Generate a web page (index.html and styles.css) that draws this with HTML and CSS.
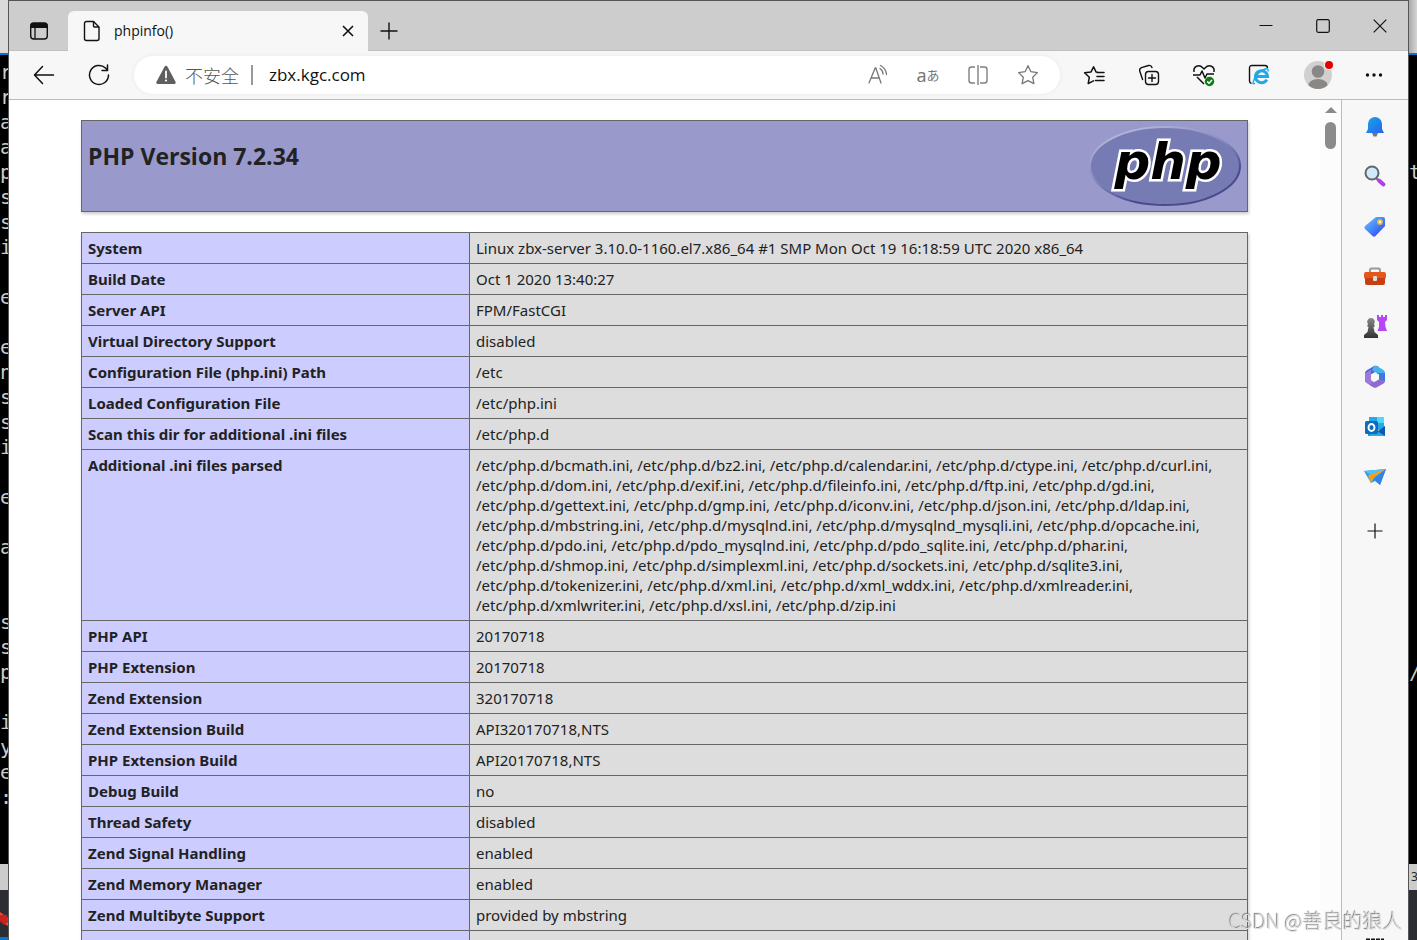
FILE: index.html
```html
<!DOCTYPE html>
<html lang="zh-CN">
<head>
<meta charset="utf-8">
<title>phpinfo()</title>
<link rel="stylesheet" href="styles.css">
</head>
<body>
<div class="desktop">
  <div class="behind behind-left">
    <div class="behind-title"></div>
    <pre class="terminal">r
r
a
a
p
s
s
i

e

e
n
s
s
i

e

a


s
s
p

i
y
e
:</pre>
    <div class="behind-status"></div>
    <div class="taskbar"><svg width="8" height="50" viewBox="0 0 8 50"><path d="M0 22l8 6v8l-8-5z" fill="#ef4a35"/><path d="M0 25h7l1 7-4 3-4-4z" fill="#c9221f"/><path d="M0 47h8v3H0z" fill="#0078d7"/></svg></div>
  </div>

  <div class="window">
    <header class="titlebar">
      <button class="tab-menu" aria-label="标签操作"><svg width="20" height="20" viewBox="0 0 20 20"><rect x="1.7" y="2" width="16.600" height="16" rx="3" fill="none" stroke="#111" stroke-width="1.400"/><path d="M1.500 7V5a3 3 0 0 1 3-3h11a3 3 0 0 1 3 3v2z" fill="#111"/><path d="M6 7v11" stroke="#111" stroke-width="1.300"/></svg></button>
      <div class="tab">
        <svg width="20" height="22" viewBox="0 0 20 22" fill="none" stroke="#111" stroke-width="1.400" stroke-linejoin="round"><path d="M4.500 1.500h7l5.500 5.500v11.500a2 2 0 0 1-2 2H4.500a2 2 0 0 1-2-2v-15a2 2 0 0 1 2-2z"/><path d="M11.500 1.500V6a1 1 0 0 0 1 1H17"/></svg>
        <span class="tab-title">phpinfo()</span>
        <button class="tab-close" aria-label="关闭标签"><svg width="12" height="12" viewBox="0 0 12 12" stroke="#111" stroke-width="1.600"><path d="M1 1l10 10M11 1L1 11"/></svg></button>
      </div>
      <button class="new-tab" aria-label="新建标签"><svg width="18" height="18" viewBox="0 0 18 18" stroke="#111" stroke-width="1.400"><path d="M9 .5v17M.5 9h17"/></svg></button>
      <div class="window-controls">
        <button aria-label="最小化"><svg width="14" height="14" viewBox="0 0 14 14" stroke="#111"><path d="M.5 6.500h13"/></svg></button>
        <button aria-label="最大化"><svg width="14" height="14" viewBox="0 0 14 14" fill="none" stroke="#111" stroke-width="1.200"><rect x=".7" y=".7" width="12.600" height="12.600" rx="1.500"/></svg></button>
        <button aria-label="关闭"><svg width="14" height="14" viewBox="0 0 14 14" stroke="#111" stroke-width="1.200"><path d="M.7.7l12.600 12.600M13.300.7L.7 13.300"/></svg></button>
      </div>
    </header>

    <nav class="toolbar">
      <button class="icon" aria-label="后退"><svg width="22" height="22" viewBox="0 0 22 22" fill="none" stroke="#111" stroke-width="1.500" stroke-linecap="round" stroke-linejoin="round"><path d="M20.500 11H1.500M9.500 2.500L1.500 11l8 8.500"/></svg></button>
      <button class="icon refresh" aria-label="刷新"><svg width="22" height="22" viewBox="0 0 22 22" fill="none" stroke="#111" stroke-width="1.500" stroke-linecap="round" stroke-linejoin="round"><path d="M20.500 11a9.500 9.500 0 1 1-3-7l2 2M19.500 1v5.500H14"/></svg></button>
      <form class="address">
        <svg class="warning" width="20" height="20" viewBox="0 0 20 20"><path d="M10 .8q1 0 1.500.9l8 15q.8 2-1.200 2.300H1.700Q-.3 18.700.5 16.700l8-15Q9 .8 10 .8z" fill="#5f5f5f"/><path d="M10 6.500v6" stroke="#fff" stroke-width="1.800" stroke-linecap="round"/><circle cx="10" cy="15.500" r="1.100" fill="#fff"/></svg>
        <label for="url">不安全</label>
        <span class="divider"></span>
        <input id="url" type="text" value="zbx.kgc.com">
        <button type="button" class="icon" aria-label="大声朗读"><svg width="22" height="22" viewBox="0 0 22 22" fill="none" stroke="#777" stroke-width="1.300" stroke-linecap="round"><path d="M2 19L8.200 4h.6L14 19M4 14h8.300"/><path d="M13 4.500q3 2 3 5.500M13.500 1.500q5.500 3 6 9" /></svg></button>
        <button type="button" class="icon translate" aria-label="翻译">a<span>あ</span></button>
        <button type="button" class="icon" aria-label="分屏"><svg width="22" height="22" viewBox="0 0 22 22" fill="none" stroke="#808080" stroke-width="1.400"><path d="M8 3H4.500a2.500 2.500 0 0 0-2.500 2.500v11A2.500 2.500 0 0 0 4.500 19H8M13 3h4.500A2.500 2.500 0 0 1 20 5.500v11a2.500 2.500 0 0 1-2.500 2.500H13M11 1v20"/></svg></button>
        <button type="button" class="icon" aria-label="收藏"><svg width="22" height="22" viewBox="0 0 22 22" fill="none" stroke="#777" stroke-width="1.300" stroke-linejoin="round"><path d="M11 1.700l2.900 6 6.500.9-4.700 4.600 1.200 6.500L11 16.600l-5.900 3.100 1.200-6.500L1.600 8.600l6.500-.9z"/></svg></button>
      </form>
      <div class="actions">
        <button class="icon" aria-label="收藏夹"><svg width="22" height="22" viewBox="0 0 22 22" fill="none" stroke="#111" stroke-width="1.500" stroke-linejoin="round" stroke-linecap="round"><path d="M14.500 8.200L13 7.900l-2.400-5.100L8 7.900l-6.400.9 4.700 4.500-1.100 6.300 5.300-2.700M14 8.500h7M14 12.500h7M12.500 16.500H21"/></svg></button>
        <button class="icon" aria-label="集锦"><svg width="22" height="22" viewBox="0 0 22 22" fill="none" stroke="#111" stroke-width="1.400" stroke-linecap="round"><rect x="7.500" y="7.500" width="13" height="13" rx="3"/><path d="M14 10.500v7M10.500 14h7M4.600 15.500L1.700 7a3 3 0 0 1 1.800-3.300L10.500 1.500a3 3 0 0 1 3.500 2"/></svg></button>
        <button class="icon" aria-label="浏览器概要"><svg width="24" height="24" viewBox="0 0 24 24" fill="none" stroke="#111" stroke-width="1.500" stroke-linejoin="round"><path d="M2 9C1 3 7 1 11 5l1 1 1-1c4-4 10-2 9 4M1 12h7l2-4 3 7 2-4h7M5 14l7 7"/><circle cx="17.500" cy="18.500" r="4.700" fill="#107c10" stroke="none"/><path d="M15.200 18.500l1.800 1.800 3-3.300" stroke="#fff"/></svg></button>
        <button class="icon" aria-label="IE 模式"><svg width="22" height="22" viewBox="0 0 22 22" fill="none"><path d="M3.500 19.500Q1.500 19 1.500 17V4Q1.500 1.500 4 1.500h13q2.500 0 2.500 2.500" stroke="#111" stroke-width="1.400"/><path d="M18.800 15.600a6 6 0 1 1 .7-3.100H9" stroke="#1ea9e9" stroke-width="3"/><path d="M7 19q-3 2.300-1.500-2Q8.500 8.500 17 5q4-1.200 3 2.500" stroke="#1ea9e9" stroke-width="1.400"/></svg></button>
        <button class="icon profile" aria-label="个人资料"><svg width="30" height="30" viewBox="0 0 30 30"><defs><clipPath id="face"><circle cx="15" cy="15" r="14"/></clipPath></defs><circle cx="15" cy="15" r="14" fill="#d2d0ce"/><g clip-path="url(#face)" fill="#8a8886"><circle cx="15" cy="11.500" r="6.300"/><ellipse cx="15" cy="26" rx="10" ry="7"/></g><circle cx="26" cy="5" r="5" fill="#f7f7f7"/><circle cx="26" cy="5" r="4" fill="#e50000"/></svg></button>
        <button class="icon" aria-label="设置及其他"><svg width="20" height="20" viewBox="0 0 20 20" fill="#111"><circle cx="3.500" cy="10" r="1.700"/><circle cx="10" cy="10" r="1.700"/><circle cx="16.500" cy="10" r="1.700"/></svg></button>
      </div>
    </nav>

    <div class="body">
      <main class="page">
        <div class="banner">
          <h1>PHP Version 7.2.34</h1>
          <svg class="logo" width="152" height="80" viewBox="0 0 152 80" role="img" aria-label="PHP logo">
            <defs><linearGradient id="rim" x1=".2" y1="0" x2=".8" y2="1"><stop offset="0" stop-color="#b8bade"/><stop offset=".45" stop-color="#8588bd"/><stop offset=".75" stop-color="#484a8c"/><stop offset="1" stop-color="#484a8c"/></linearGradient></defs>
            <ellipse cx="76" cy="40" rx="75" ry="39" fill="#777bb3" stroke="url(#rim)" stroke-width="2"/>
            <text class="logo-text" x="79" y="53" text-anchor="middle">php</text>
          </svg>
        </div>
        <table class="info">
          <colgroup><col class="key"><col></colgroup>
          <tbody>
          <tr><th scope="row">System</th><td>Linux zbx-server 3.10.0-1160.el7.x86_64 #1 SMP Mon Oct 19 16:18:59 UTC 2020 x86_64</td></tr>
          <tr><th scope="row">Build Date</th><td>Oct 1 2020 13:40:27</td></tr>
          <tr><th scope="row">Server API</th><td>FPM/FastCGI</td></tr>
          <tr><th scope="row">Virtual Directory Support</th><td>disabled</td></tr>
          <tr><th scope="row">Configuration File (php.ini) Path</th><td>/etc</td></tr>
          <tr><th scope="row">Loaded Configuration File</th><td>/etc/php.ini</td></tr>
          <tr><th scope="row">Scan this dir for additional .ini files</th><td>/etc/php.d</td></tr>
          <tr><th scope="row">Additional .ini files parsed</th><td>/etc/php.d/bcmath.ini, /etc/php.d/bz2.ini, /etc/php.d/calendar.ini, /etc/php.d/ctype.ini, /etc/php.d/curl.ini,<br>/etc/php.d/dom.ini, /etc/php.d/exif.ini, /etc/php.d/fileinfo.ini, /etc/php.d/ftp.ini, /etc/php.d/gd.ini,<br>/etc/php.d/gettext.ini, /etc/php.d/gmp.ini, /etc/php.d/iconv.ini, /etc/php.d/json.ini, /etc/php.d/ldap.ini,<br>/etc/php.d/mbstring.ini, /etc/php.d/mysqlnd.ini, /etc/php.d/mysqlnd_mysqli.ini, /etc/php.d/opcache.ini,<br>/etc/php.d/pdo.ini, /etc/php.d/pdo_mysqlnd.ini, /etc/php.d/pdo_sqlite.ini, /etc/php.d/phar.ini,<br>/etc/php.d/shmop.ini, /etc/php.d/simplexml.ini, /etc/php.d/sockets.ini, /etc/php.d/sqlite3.ini,<br>/etc/php.d/tokenizer.ini, /etc/php.d/xml.ini, /etc/php.d/xml_wddx.ini, /etc/php.d/xmlreader.ini,<br>/etc/php.d/xmlwriter.ini, /etc/php.d/xsl.ini, /etc/php.d/zip.ini</td></tr>
          <tr><th scope="row">PHP API</th><td>20170718</td></tr>
          <tr><th scope="row">PHP Extension</th><td>20170718</td></tr>
          <tr><th scope="row">Zend Extension</th><td>320170718</td></tr>
          <tr><th scope="row">Zend Extension Build</th><td>API320170718,NTS</td></tr>
          <tr><th scope="row">PHP Extension Build</th><td>API20170718,NTS</td></tr>
          <tr><th scope="row">Debug Build</th><td>no</td></tr>
          <tr><th scope="row">Thread Safety</th><td>disabled</td></tr>
          <tr><th scope="row">Zend Signal Handling</th><td>enabled</td></tr>
          <tr><th scope="row">Zend Memory Manager</th><td>enabled</td></tr>
          <tr><th scope="row">Zend Multibyte Support</th><td>provided by mbstring</td></tr>
          <tr><th scope="row">&nbsp;</th><td></td></tr>
          </tbody>
        </table>
      </main>
      <div class="scrollbar"><span class="arrow"></span><span class="thumb"></span></div>
      <aside class="sidebar">
        <button aria-label="通知"><svg width="24" height="24" viewBox="0 0 24 24"><defs><linearGradient id="bell" x2="1" y2="1"><stop stop-color="#18a6e8"/><stop offset="1" stop-color="#2563f0"/></linearGradient></defs><path d="M9 18h6l-1.500 3.500h-3z" fill="#777"/><path d="M3 18l2-4V9a7 7 0 0 1 14 0v5l2 4z" fill="url(#bell)"/></svg></button>
        <button aria-label="搜索"><svg width="24" height="24" viewBox="0 0 24 24"><path d="M12 12l3 3" stroke="#666" stroke-width="2"/><path d="M16 15.500l4.500 4" stroke="#b43cf0" stroke-width="4" stroke-linecap="round"/><circle cx="9" cy="8" r="6.500" fill="#cfeafb" stroke="#666" stroke-width="2"/></svg></button>
        <button aria-label="购物"><svg width="24" height="24" viewBox="0 0 24 24"><defs><linearGradient id="tag" x2="1" y2="1"><stop stop-color="#7cc0ff"/><stop offset=".5" stop-color="#4287fb"/><stop offset="1" stop-color="#3730e8"/></linearGradient></defs><path d="M13 2h7q2 0 2 2v7l-9.500 10q-1.500 1.500-3 0L2 14q-1.300-1.500 0-3z" fill="url(#tag)"/><circle cx="17" cy="7" r="2" fill="#fff" stroke="#f6c22c" stroke-width="1.700"/></svg></button>
        <button aria-label="工具"><svg width="24" height="24" viewBox="0 0 24 24"><path d="M7 8V5q0-1.500 1.500-1.500h7Q17 3.500 17 5v3" fill="none" stroke="#999" stroke-width="2"/><rect x="1" y="7" width="22" height="7" rx="2" fill="#e4571b"/><path d="M2 13h20v5q0 2-2 2H4q-2 0-2-2z" fill="#c73e13"/><rect x="10" y="11" width="4" height="5" rx="1" fill="#ddd"/></svg></button>
        <button aria-label="游戏"><svg width="24" height="24" viewBox="0 0 24 24"><defs><linearGradient id="pawn" y2="1" x2="0"><stop stop-color="#888"/><stop offset="1" stop-color="#333"/></linearGradient></defs><path d="M14 0h2v2h2V0h2v2h2V0h2v5l-2 2 .5 5 1.500 4h-9.500l1.500-4V7l-2-2z" fill="#b747f5"/><path d="M8 3a4 4 0 0 1 3 6.500l1 1.500-1.500 1 1 5L15 20v3H1v-3l3.500-3 1-5L4 11l1-1.500A4 4 0 0 1 8 3z" fill="url(#pawn)"/></svg></button>
        <button aria-label="Microsoft 365"><svg width="24" height="24" viewBox="0 0 24 24"><path d="M11 1L3.500 5.500Q2 6.500 2 8v9l6-3V9.500l5-3L16 2q-3-2-5-1z" fill="#4468d8"/><path d="M11 1q2-.5 4 .7l5.500 3.300Q22 6 22 8v8l-6-4V9.500l-5-3L9 5z" fill="#45b2ee"/><path d="M8 8.500V15l4 3-2 4-6.500-4Q2 17 2 15V8.500l6-4z" fill="#9b7add"/><path d="M22 14v2q0 1.500-1.500 2.500L13.500 22.500q-1.500.7-3 0L6 19.500l6-3 4-2.500V9.500l6 4z" fill="#8e6bd0"/><path d="M22 8v8l-6-2V9.500L13 8z" fill="#3d7ae0"/><path d="M12 7.500l4 2.300v4.500L12 16.600l-4-2.300V9.800z" fill="#f7f7f7"/></svg></button>
        <button aria-label="Outlook"><svg width="24" height="24" viewBox="0 0 24 24"><path d="M6 2h15v13H6z" fill="#28a8ea"/><path d="M14 2h7v6h-7z" fill="#50d9ff"/><path d="M5 12l9 5 8-6v10H5z" fill="#1490df"/><path d="M22 11v10l-8-4z" fill="#0a5ba8"/><path d="M5 21l9-5 8 5z" fill="#28a8ea"/><rect x="2" y="6" width="13" height="13" rx="1.500" fill="#0f6cbd"/><ellipse cx="8.500" cy="12.500" rx="3" ry="3.500" fill="none" stroke="#fff" stroke-width="1.900"/></svg></button>
        <button aria-label="拖放"><svg width="24" height="24" viewBox="0 0 24 24"><path d="M1 6l22-2-6 16-5-4-4 2z" fill="#279ded"/><path d="M1 6l22-2-15 6z" fill="#55c1f5"/><path d="M23 4L5 10.500l3 7.500 3-5.500z" fill="#f6a11c"/><path d="M23 4L11 14l6 6z" fill="#3483e8"/></svg></button>
        <button class="add" aria-label="自定义"><svg width="16" height="16" viewBox="0 0 16 16" stroke="#111" stroke-width="1.200"><path d="M8 .5v15M.5 8h15"/></svg></button>
        <button class="settings" aria-label="设置"><svg width="24" height="24" viewBox="0 0 24 24" fill="none" stroke="#111" stroke-width="2"><circle cx="12" cy="12" r="3"/><circle cx="12" cy="12" r="8"/><path d="M3 2h18" stroke-width="3" stroke-dasharray="4 1"/></svg></button>
      </aside>
    </div>
  </div>

  <div class="behind behind-right">
    <div class="behind-title"></div>
    <pre class="terminal">




t



















/</pre>
    <div class="behind-status">3</div>
    <div class="taskbar"></div>
  </div>
</div>
<div class="watermark">CSDN @善良的狼人</div>
</body>
</html>
```
FILE: styles.css
```css
* { box-sizing: border-box; }

body {
  margin: 0;
  overflow: hidden;
  font-family: "Noto Sans", "Noto Sans CJK SC", sans-serif;
  color: #222;
}

button {
  display: flex;
  align-items: center;
  justify-content: center;
  padding: 0;
  border: 0;
  background: none;
  flex: none;
}

svg { display: block; flex: none; }

.desktop { display: flex; height: 100vh; }

/* Slivers of the windows behind the browser */
.behind {
  display: flex;
  flex-direction: column;
  width: 8px;
  flex: none;
  overflow: hidden;
  background: #000;
}
.behind-title { height: 55px; flex: none; background: #dadada; border-bottom: 2px solid #0078d7; }
.behind-right .behind-title { background: linear-gradient(90deg, #aaa, #d5d5d5); }
.terminal {
  flex: 1;
  min-height: 0;
  overflow: hidden;
  margin: 0;
  padding-top: 5px;
  font: 20px/25px "DejaVu Sans Mono", monospace;
  color: #ccc;
}
.behind-right .terminal { text-indent: -3px; }
.behind-status { height: 26px; flex: none; background: #ccc; font-size: 12px; line-height: 26px; padding-left: 2px; }
.taskbar { height: 50px; flex: none; background: #2c2d33; }

/* Browser window */
.window {
  display: flex;
  flex-direction: column;
  flex: 1;
  min-width: 0;
  border: 1px solid #555;
  border-bottom: 0;
  background: #f7f7f7;
}
.titlebar {
  display: flex;
  flex: none;
  height: 50px;
  padding-left: 10px;
  background: #cdcdcd;
  border-bottom: 1px solid #c0c0c0;
}
.tab-menu { width: 40px; margin: 10px 9px 0 0; height: 40px; }
.tab {
  display: flex;
  align-items: center;
  width: 300px;
  height: 40px;
  margin-top: 10px;
  padding: 0 14px;
  border-radius: 6px 6px 0 0;
  background: #f7f7f7;
}
.tab-title { flex: 1; padding-left: 12px; font: 14px/20px "Open Sans", sans-serif; color: #111; }
.tab-close { width: 12px; height: 20px; }
.new-tab { width: 42px; height: 40px; margin-top: 10px; }
.window-controls { display: flex; margin-left: auto; }
.window-controls button { width: 57px; }

.toolbar {
  display: flex;
  align-items: center;
  flex: none;
  height: 49px;
  padding: 0 19px 0 20px;
  border-bottom: 1px solid #bbb;
}
.icon { width: 30px; height: 30px; }
.refresh { margin: 0 20px 0 25px; }
.address {
  display: flex;
  align-items: center;
  flex: 1;
  min-width: 0;
  height: 38px;
  padding: 0 17px 0 22px;
  border-radius: 19px;
  background: #fff;
  box-shadow: 0 0 4px #e8e8e8;
}
.address label {
  margin-left: 9px;
  font: 300 18px/24px "Noto Sans CJK SC", sans-serif;
  color: #555;
}
.divider { width: 2px; height: 20px; margin: 0 12px; background: #999; flex: none; }
.address input {
  flex: 1;
  min-width: 0;
  border: 0;
  padding: 0 4px;
  font: 17px/24px "Open Sans", sans-serif;
  color: #111;
  background: none;
}
.address .icon + .icon { margin-left: 20px; }
.translate { font: 18px/24px "Noto Sans", sans-serif; color: #777; }
.translate span { font: 13px/24px "Noto Sans CJK JP", sans-serif; }
.actions { display: flex; gap: 25px; margin-left: 19px; }
.profile { margin: 0 1px 0 4px; }

.body { display: flex; flex: 1; min-height: 0; }
.page {
  flex: 1;
  min-width: 0;
  overflow: hidden;
  padding: 20px 72px 0;
  background: #fff;
}
.banner {
  display: flex;
  justify-content: space-between;
  align-items: flex-start;
  max-width: 1167px;
  margin: 0 auto;
  padding: 5px 6px;
  border: 1px solid #666;
  background: #9999cc;
  box-shadow: 1px 2px 3px #ccc;
}
.banner h1 { margin: 14px 0 0; font: 700 23px/32px "Open Sans", sans-serif; }
.logo-text {
  font: italic bold 50px "DejaVu Sans", sans-serif;
  fill: #000;
  stroke: #fff;
  stroke-width: 5px;
  paint-order: stroke;
}
.info {
  width: 100%;
  max-width: 1167px;
  margin: 20px auto 0;
  border-collapse: collapse;
  table-layout: fixed;
  font-size: 15px;
  line-height: 20px;
  box-shadow: 1px 2px 3px #ccc;
}
.key { width: 388px; }
.info th, .info td {
  padding: 5px 6px;
  border: 1px solid #666;
  text-align: left;
  vertical-align: top;
}
.info th { background: #ccccff; font-weight: 700; }
.info td { background: #ddd; }

.scrollbar {
  display: flex;
  flex-direction: column;
  align-items: center;
  width: 22px;
  flex: none;
  padding-top: 7px;
  background: #fcfcfc;
  border-right: 1px solid #bbb;
}
.arrow { border: 6px solid transparent; border-top: 0; border-bottom-color: #8b8b8b; }
.thumb { width: 11px; height: 27px; margin-top: 9px; border-radius: 6px; background: #8b8b8b; }

.sidebar {
  display: flex;
  flex-direction: column;
  align-items: center;
  width: 66px;
  flex: none;
  padding-top: 2px;
  overflow: hidden;
}
.sidebar button { width: 40px; height: 50px; }
.sidebar .add { margin-top: 4px; }
.sidebar .settings { margin: auto 0 -35px; }

.watermark {
  position: fixed;
  right: 14px;
  bottom: 4px;
  font: 300 20px/30px "Noto Sans CJK SC", sans-serif;
  color: #ddd;
  text-shadow: -1px -1px 1px #777;
}
```
